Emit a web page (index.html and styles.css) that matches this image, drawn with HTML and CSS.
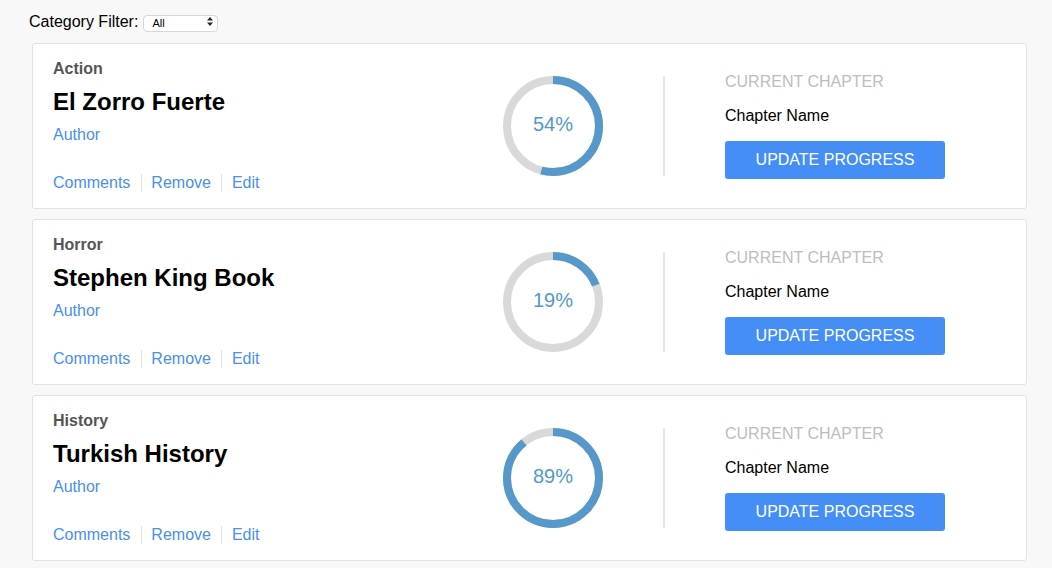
FILE: index.html
```html
<!DOCTYPE html>
<html>
<head>
<meta charset="utf-8">
<link rel="stylesheet" href="styles.css">
</head>
<body>
<div class="page">
  <div class="filter">
    <label class="filter-label">Category Filter:</label>
    <span class="select-wrap">
      <select class="select"><option>All</option></select>
      <svg class="select-arrow" width="6" height="9" viewBox="0 0 6 9"><path d="M0 3.5 L3 0 L6 3.5 Z M0 5.5 L3 9 L6 5.5 Z" fill="#222"/></svg>
    </span>
  </div>
  <div class="list">
    <div class="card">
      <div class="info">
        <div class="category">Action</div>
        <div class="title">El Zorro Fuerte</div>
        <a class="author">Author</a>
        <div class="links"><a class="link">Comments</a><a class="link">Remove</a><a class="link">Edit</a></div>
      </div>
      <div class="progress">
        <svg class="ring" width="100" height="100" viewBox="0 0 100 100">
          <circle cx="50" cy="50" r="46" fill="none" stroke="#d9d9d9" stroke-width="8"/>
          <circle cx="50" cy="50" r="46" fill="none" stroke="#5598c9" stroke-width="8" stroke-dasharray="156.08 289.03" transform="rotate(-90 50 50)"/>
        </svg>
        <span class="pct">54%</span>
      </div>
      <div class="divider"></div>
      <div class="chapter">
        <div class="chapter-label">CURRENT CHAPTER</div>
        <div class="chapter-name">Chapter Name</div>
        <button class="btn">UPDATE PROGRESS</button>
      </div>
    </div>
    <div class="card">
      <div class="info">
        <div class="category">Horror</div>
        <div class="title">Stephen King Book</div>
        <a class="author">Author</a>
        <div class="links"><a class="link">Comments</a><a class="link">Remove</a><a class="link">Edit</a></div>
      </div>
      <div class="progress">
        <svg class="ring" width="100" height="100" viewBox="0 0 100 100">
          <circle cx="50" cy="50" r="46" fill="none" stroke="#d9d9d9" stroke-width="8"/>
          <circle cx="50" cy="50" r="46" fill="none" stroke="#5598c9" stroke-width="8" stroke-dasharray="54.92 289.03" transform="rotate(-90 50 50)"/>
        </svg>
        <span class="pct">19%</span>
      </div>
      <div class="divider"></div>
      <div class="chapter">
        <div class="chapter-label">CURRENT CHAPTER</div>
        <div class="chapter-name">Chapter Name</div>
        <button class="btn">UPDATE PROGRESS</button>
      </div>
    </div>
    <div class="card">
      <div class="info">
        <div class="category">History</div>
        <div class="title">Turkish History</div>
        <a class="author">Author</a>
        <div class="links"><a class="link">Comments</a><a class="link">Remove</a><a class="link">Edit</a></div>
      </div>
      <div class="progress">
        <svg class="ring" width="100" height="100" viewBox="0 0 100 100">
          <circle cx="50" cy="50" r="46" fill="none" stroke="#d9d9d9" stroke-width="8"/>
          <circle cx="50" cy="50" r="46" fill="none" stroke="#5598c9" stroke-width="8" stroke-dasharray="257.24 289.03" transform="rotate(-90 50 50)"/>
        </svg>
        <span class="pct">89%</span>
      </div>
      <div class="divider"></div>
      <div class="chapter">
        <div class="chapter-label">CURRENT CHAPTER</div>
        <div class="chapter-name">Chapter Name</div>
        <button class="btn">UPDATE PROGRESS</button>
      </div>
    </div>
  </div>
</div>
</body>
</html>
```
FILE: styles.css
```css
html, body {
  margin: 0;
  padding: 0;
  background: #f8f8f8;
  font-family: "Liberation Sans", Arial, sans-serif;
  color: #000;
}
.page {
  padding: 12px 0 0 0;
}
.filter {
  display: flex;
  align-items: center;
  gap: 5px;
  padding-left: 29px;
  height: 19px;
}
.filter-label {
  font-size: 16px;
  line-height: 19px;
}
.select-wrap {
  position: relative;
  display: inline-block;
  width: 75px;
  height: 17px;
}
.select {
  appearance: none;
  -webkit-appearance: none;
  width: 75px;
  height: 17px;
  margin: 0;
  padding: 0 0 0 8px;
  border: 1px solid #d6d6d6;
  border-radius: 4px;
  background: #fff;
  font-family: "Liberation Sans", Arial, sans-serif;
  font-size: 11px;
  color: #000;
  box-sizing: border-box;
}
.select-arrow {
  position: absolute;
  right: 5px;
  top: 4px;
  pointer-events: none;
}
.list {
  margin: 12px 0 0 32px;
  width: 995px;
  display: flex;
  flex-direction: column;
  gap: 10px;
}
.card {
  box-sizing: border-box;
  height: 166px;
  background: #fff;
  border: 1px solid #e2e2e2;
  border-radius: 3px;
  padding: 0 20px;
  display: flex;
  align-items: center;
}
.info {
  width: 450px;
  align-self: flex-start;
  padding-top: 16px;
  display: flex;
  flex-direction: column;
  align-items: flex-start;
}
.category {
  font-size: 16px;
  line-height: 18px;
  font-weight: bold;
  color: #555;
}
.title {
  margin-top: 11px;
  font-size: 24px;
  line-height: 26px;
  font-weight: bold;
  color: #000;
}
.author {
  margin-top: 11px;
  font-size: 16px;
  line-height: 18px;
  color: #4a8fe8;
}
.links {
  margin-top: 30px;
  display: flex;
  align-items: center;
}
.link {
  font-size: 16px;
  line-height: 18px;
  color: #4a8fe8;
  padding: 0 10px;
  border-left: 1px solid #e3e3e3;
}
.link:first-child {
  padding-left: 0;
  border-left: none;
  padding-right: 11px;
}
.link:nth-child(2) {
  padding-left: 9px;
}
.progress {
  position: relative;
  width: 100px;
  height: 100px;
  display: flex;
  align-items: center;
  justify-content: center;
}
.ring {
  position: absolute;
  left: 0;
  top: 0;
}
.pct {
  position: relative;
  top: -2px;
  font-size: 20px;
  color: #5598c9;
}
.divider {
  width: 2px;
  height: 100px;
  background: #e6e6e6;
  margin-left: 60px;
}
.chapter {
  margin-left: 60px;
  display: flex;
  flex-direction: column;
  align-items: flex-start;
}
.chapter-label {
  font-size: 16px;
  line-height: 18px;
  color: #bdbdbd;
}
.chapter-name {
  margin-top: 16px;
  font-size: 16px;
  line-height: 18px;
  color: #000;
}
.btn {
  margin-top: 16px;
  width: 220px;
  height: 38px;
  border: none;
  border-radius: 3px;
  background: #448ef6;
  color: #fff;
  font-family: "Liberation Sans", Arial, sans-serif;
  font-size: 16px;
  padding: 0;
}
```
